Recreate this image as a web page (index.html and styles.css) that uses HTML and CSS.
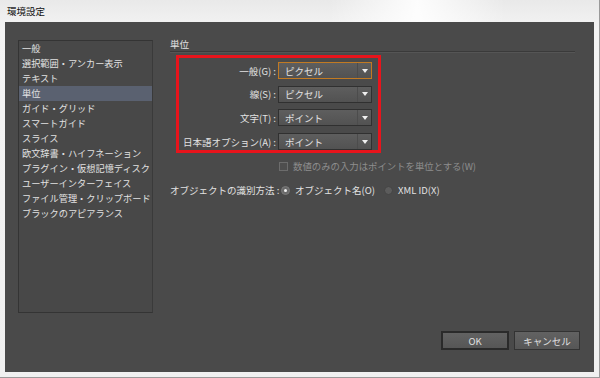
FILE: index.html
```html
<!DOCTYPE html>
<html lang="ja">
<head>
    <meta charset="UTF-8">
    <title>環境設定</title>
    <link rel="stylesheet" href="styles.css">
</head>
<body>

<div class="window">
    <div class="titlebar">環境設定</div>

    <div class="panel">
        <div class="main">
            <ul class="category-list">
                <li>一般</li>
                <li>選択範囲・アンカー表示</li>
                <li>テキスト</li>
                <li class="selected">単位</li>
                <li>ガイド・グリッド</li>
                <li>スマートガイド</li>
                <li>スライス</li>
                <li>欧文辞書・ハイフネーション</li>
                <li>プラグイン・仮想記憶ディスク</li>
                <li>ユーザーインターフェイス</li>
                <li>ファイル管理・クリップボード</li>
                <li>ブラックのアピアランス</li>
            </ul>

            <div class="settings">
                <div class="section-title">単位</div>

                <div class="units-box">
                    <div class="field">
                        <span class="label">一般(G) :</span>
                        <div class="dropdown focused"><span>ピクセル</span><i class="arrow"></i></div>
                    </div>
                    <div class="field">
                        <span class="label">線(S) :</span>
                        <div class="dropdown"><span>ピクセル</span><i class="arrow"></i></div>
                    </div>
                    <div class="field">
                        <span class="label">文字(T) :</span>
                        <div class="dropdown"><span>ポイント</span><i class="arrow"></i></div>
                    </div>
                    <div class="field">
                        <span class="label">日本語オプション(A) :</span>
                        <div class="dropdown"><span>ポイント</span><i class="arrow"></i></div>
                    </div>
                </div>

                <div class="check-row">
                    <span class="checkbox"></span>
                    <span class="disabled-text">数値のみの入力はポイントを単位とする(W)</span>
                </div>

                <div class="radio-row">
                    <span class="radio-label">オブジェクトの識別方法 :</span>
                    <span class="radio checked"></span>
                    <span class="radio-text">オブジェクト名(O)</span>
                    <span class="radio"></span>
                    <span class="radio-text">XML ID(X)</span>
                </div>
            </div>
        </div>

        <div class="buttons">
            <button class="btn default">OK</button>
            <button class="btn">キャンセル</button>
        </div>
    </div>
</div>

</body>
</html>
```

FILE: styles.css
```css
html, body {
    margin: 0;
    padding: 0;
}
body {
    width: 600px;
    height: 378px;
    overflow: hidden;
    font-family: "Noto Sans CJK JP", "Noto Sans", sans-serif;
    background-color: #d8d8d8;
}
.window {
    width: 600px;
    height: 378px;
    box-sizing: border-box;
    padding: 0 5px 6px 5px;
    background: linear-gradient(to bottom, #e9e9e9 0%, #f4f4f4 8%, #f0f0f0 100%);
    border-right: 1px solid #9a9a9a;
    border-bottom: 1px solid #9a9a9a;
}
.titlebar {
    height: 22px;
    line-height: 22px;
    padding-left: 2px;
    font-size: 9.5px;
    color: #111;
    background: linear-gradient(to right, transparent 0%, transparent 55%, rgba(255,255,255,0.9) 70%, transparent 85%);
}
.panel {
    height: 350px;
    box-sizing: border-box;
    background-color: #4a4a4a;
    padding: 18px 0 0 13px;
    display: flex;
    flex-direction: column;
    color: #e2e2e2;
}
.main {
    display: flex;
    height: 273px;
}
.category-list {
    list-style: none;
    margin: 0;
    padding: 0;
    width: 135px;
    height: 273px;
    box-sizing: border-box;
    border: 1px solid #343434;
    border-right-color: #3a3a3a;
    background-color: #484848;
    font-size: 9.2px;
}
.category-list li {
    height: 15px;
    line-height: 15px;
    padding-left: 3px;
    white-space: nowrap;
}
.category-list li.selected {
    background-color: #5a6170;
}
.settings {
    margin-left: 17px;
    width: 405px;
}
.section-title {
    height: 11px;
    line-height: 9px;
    font-size: 9.5px;
    border-bottom: 1px solid #3a3a3a;
    box-shadow: 0 1px 0 #555;
}
.units-box {
    margin: 3px 0 0 6px;
    width: 205px;
    height: 98px;
    box-sizing: border-box;
    border: 3px solid #e8141c;
    padding: 4px 6px 0 0;
}
.field {
    display: flex;
    justify-content: flex-end;
    align-items: center;
    height: 17px;
    margin-bottom: 6.7px;
    font-size: 9.5px;
}
.label {
    margin-right: 2px;
    white-space: nowrap;
}
.dropdown {
    width: 94px;
    height: 17px;
    box-sizing: border-box;
    border: 1px solid #303030;
    background: linear-gradient(to bottom, #5e5e5e, #525252);
    display: flex;
    align-items: center;
    padding-left: 6px;
    color: #e4e4e4;
}
.dropdown.focused {
    border-color: #c27a22;
}
.dropdown span {
    flex: 1;
}
.arrow {
    width: 13px;
    height: 15px;
    border-left: 1px solid #4c4c4c;
    display: flex;
    align-items: center;
    justify-content: center;
}
.arrow::after {
    content: "";
    border-left: 3px solid transparent;
    border-right: 3px solid transparent;
    border-top: 4px solid #f0f0f0;
}
.check-row {
    display: flex;
    align-items: center;
    margin-top: 7px;
    padding-left: 109px;
    height: 12px;
    font-size: 9.4px;
}
.checkbox {
    width: 9px;
    height: 9px;
    box-sizing: border-box;
    border: 1px solid #6c6c6c;
    background-color: #4e4e4e;
    margin-right: 5px;
}
.disabled-text {
    color: #8e8e8e;
}
.radio-row {
    display: flex;
    align-items: center;
    margin-top: 12px;
    height: 12px;
    font-size: 9.5px;
}
.radio-label {
    width: 111px;
    white-space: nowrap;
}
.radio {
    width: 9px;
    height: 9px;
    box-sizing: border-box;
    border-radius: 50%;
    background-color: #5c5c5c;
    border: 1px solid #444;
    margin-right: 5px;
    display: flex;
    align-items: center;
    justify-content: center;
}
.radio.checked {
    background-color: #6a6a6a;
    border-color: #7a7a7a;
}
.radio.checked::after {
    content: "";
    width: 3px;
    height: 3px;
    border-radius: 50%;
    background-color: #f2f2f2;
}
.radio-text {
    margin-right: 9px;
}
.buttons {
    display: flex;
    justify-content: flex-end;
    margin-top: 18px;
    padding-right: 14px;
}
.btn {
    height: 19px;
    box-sizing: border-box;
    margin-left: 5px;
    border: 1px solid #333;
    background: linear-gradient(to bottom, #626262, #565656);
    color: #e0e0e0;
    font-family: "Noto Sans CJK JP", "Noto Sans", sans-serif;
    font-size: 9.5px;
    padding: 0;
    width: 66px;
}
.btn.default {
    width: 68px;
    border: 2px solid #2a2a2a;
}
```
